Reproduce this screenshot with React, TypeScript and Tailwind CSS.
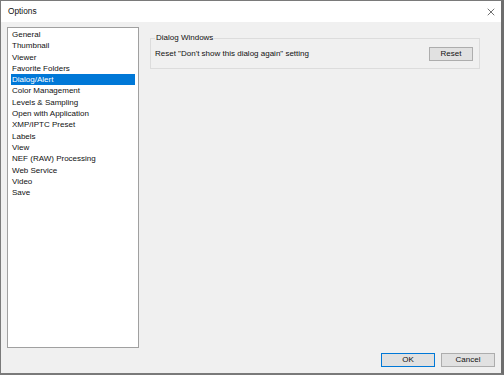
import { X } from "lucide-react"

const items = [
  "General",
  "Thumbnail",
  "Viewer",
  "Favorite Folders",
  "Dialog/Alert",
  "Color Management",
  "Levels & Sampling",
  "Open with Application",
  "XMP/IPTC Preset",
  "Labels",
  "View",
  "NEF (RAW) Processing",
  "Web Service",
  "Video",
  "Save",
]

export default function App() {
  return (
    <div
      className="w-[504px] h-[375px] flex flex-col bg-[#f0f0f0] border border-[#7a7a7a] border-r-[3px] border-r-[#6d6d6d] border-b-[2px] text-[8px] text-[#111]"
      style={{ fontFamily: '"Liberation Sans", Arial, sans-serif' }}
    >
      {/* title bar */}
      <div className="h-[21px] bg-white flex items-center justify-between pl-[7px] pr-[4px] shrink-0">
        <span className="text-[8.3px]">Options</span>
        <X className="w-[12px] h-[12px] text-[#333]" strokeWidth={1.4} />
      </div>

      <div className="flex flex-1 pt-[5px] px-[6px]">
        {/* category list */}
        <div className="w-[132px] h-[321px] bg-white border border-[#a0a0a0] pt-[1px] px-[3px] shrink-0">
          {items.map((item) => (
            <div
              key={item}
              className={`h-[11.3px] leading-[11.3px] px-[1px] whitespace-nowrap ${
                item === "Dialog/Alert" ? "bg-[#0078d7] text-white" : ""
              }`}
            >
              {item}
            </div>
          ))}
        </div>

        {/* settings panel */}
        <div className="flex-1 pl-[11px] pr-[15px] pt-[11px]">
          <div className="relative border border-[#dcdcdc] h-[31px] flex items-center justify-between pl-[4px] pr-[6px] pt-[1px]">
            <span className="absolute left-[4px] top-[-7px] bg-[#f0f0f0] px-[1px] leading-[11px]">Dialog Windows</span>
            <span className="whitespace-nowrap">Reset "Don't show this dialog again" setting</span>
            <button className="w-[44px] h-[14px] bg-[#e1e1e1] border border-[#adadad] leading-[12px]">
              Reset
            </button>
          </div>
        </div>
      </div>

      {/* footer buttons */}
      <div className="flex justify-end gap-[6px] pr-[6px] pb-[6px] pt-[4px]">
        <button className="w-[54px] h-[14px] bg-[#e1e1e1] border border-[#0078d7] leading-[12px]">OK</button>
        <button className="w-[54px] h-[14px] bg-[#e1e1e1] border border-[#adadad] leading-[12px]">Cancel</button>
      </div>
    </div>
  )
}
